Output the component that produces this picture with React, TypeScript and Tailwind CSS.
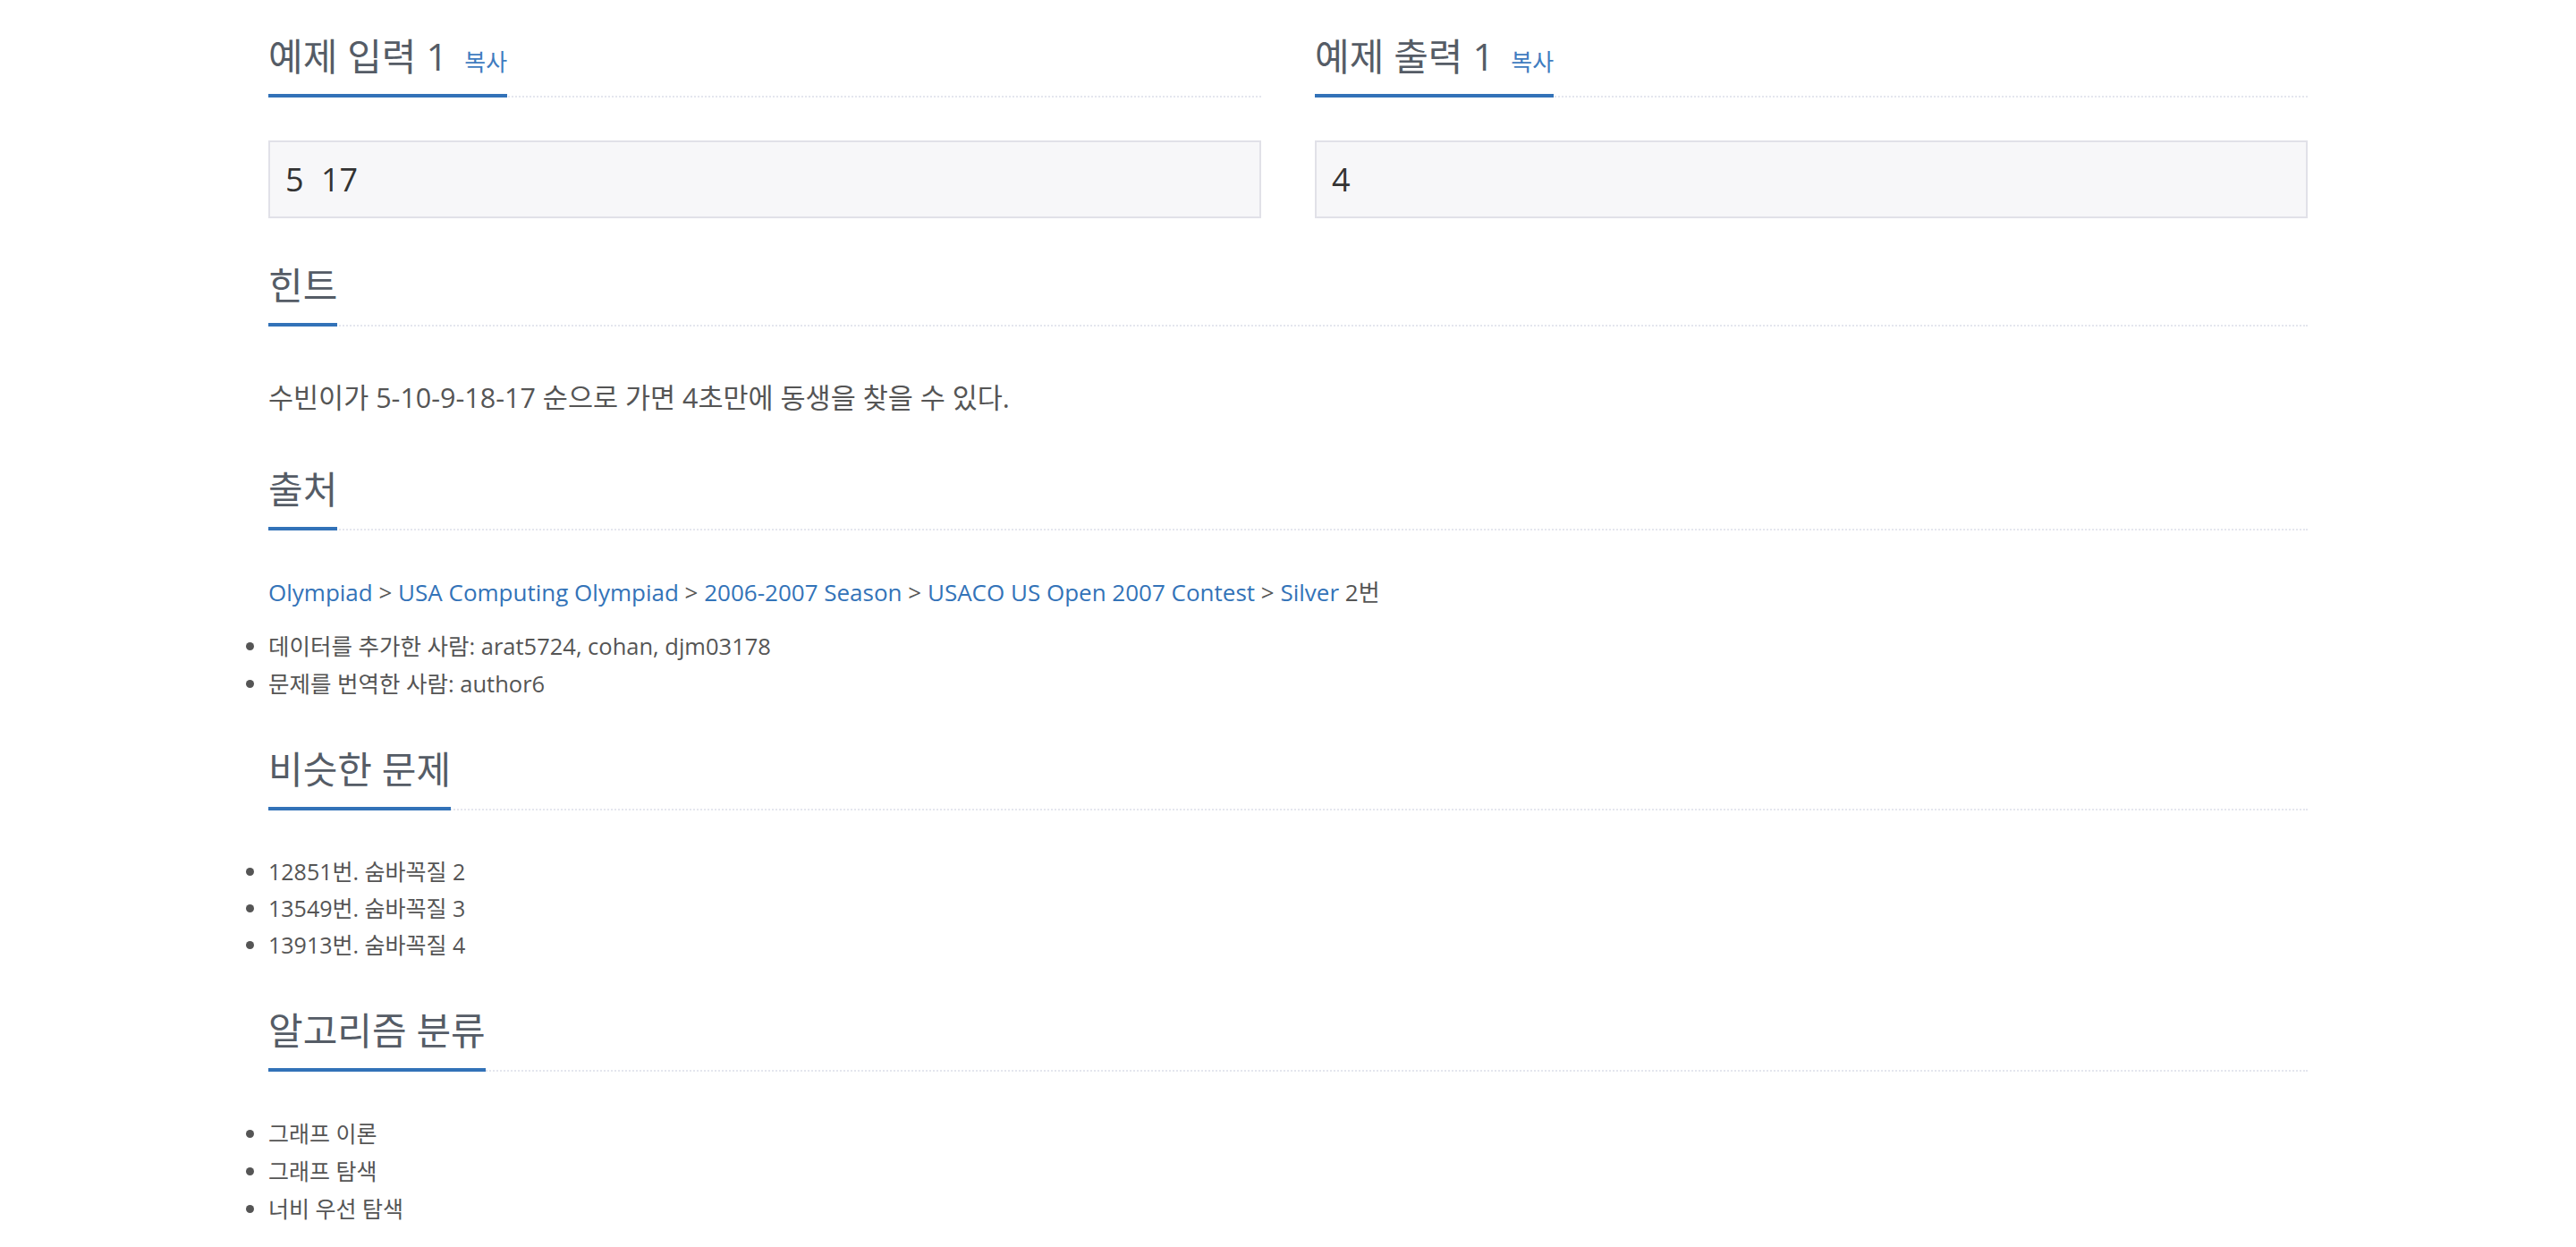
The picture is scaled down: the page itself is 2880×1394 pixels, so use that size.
import React from 'react';

const font = "font-['Open_Sans','Noto_Sans_CJK_KR',sans-serif]";

const Headline: React.FC<{ children: React.ReactNode; className?: string }> = ({ children, className = '' }) => (
    <div className={`flex border-b-2 border-dotted border-[#e4e6ee] ${className}`}>
        <h2 className="-mb-[2px] border-b-4 border-[#3272b8] pb-[19px] text-[42px] leading-[46px] font-normal text-[#555c66] whitespace-nowrap">
            {children}
        </h2>
    </div>
);

const SampleBox: React.FC<{ title: string; data: string }> = ({ title, data }) => (
    <div>
        <Headline>
            {title} <a href="#" className="ml-[8px] text-[26px] leading-none text-[#3f7cc0]">복사</a>
        </Headline>
        <pre className={`mt-[48px] border-2 border-[#e1e1e8] bg-[#f7f7f9] px-[17px] py-[16px] text-[36px] leading-[51px] text-[#333] [word-spacing:10px] ${font}`}>
            {data}
        </pre>
    </div>
);

const sourceTrail = ['Olympiad', 'USA Computing Olympiad', '2006-2007 Season', 'USACO US Open 2007 Contest'];

const similar = ['12851번. 숨바꼭질 2', '13549번. 숨바꼭질 3', '13913번. 숨바꼭질 4'];
const tags = ['그래프 이론', '그래프 탐색', '너비 우선 탐색'];

export default function App() {
    return (
        <div className={`min-h-screen bg-white ${font}`}>
            <div className="mx-auto w-[2280px] pt-[40px] pb-[22px]">
                <div className="grid grid-cols-2 gap-x-[60px]">
                    <SampleBox title="예제 입력 1" data="5 17" />
                    <SampleBox title="예제 출력 1" data="4" />
                </div>

                <Headline className="mt-[52px]">힌트</Headline>
                <p className="mt-[57px] text-[30.5px] leading-[44px] text-[#555]">
                    수빈이가 5-10-9-18-17 순으로 가면 4초만에 동생을 찾을 수 있다.
                </p>

                <Headline className="mt-[58px]">출처</Headline>
                <p className="mt-[49px] text-[26px] leading-[40px] text-[#555]">
                    {sourceTrail.map(s => (
                        <React.Fragment key={s}>
                            <a href="#" className="text-[#3373b8]">{s}</a> &gt;{' '}
                        </React.Fragment>
                    ))}
                    <a href="#" className="text-[#3373b8]">Silver</a> 2번
                </p>
                <ul className="mt-[19px] list-disc text-[25.5px] leading-[42px] text-[#555]">
                    <li>데이터를 추가한 사람: arat5724, cohan, djm03178</li>
                    <li>문제를 번역한 사람: author6</li>
                </ul>

                <Headline className="mt-[52px]">비슷한 문제</Headline>
                <ul className="mt-[48px] list-disc text-[25px] leading-[41px] text-[#555]">
                    {similar.map(s => <li key={s}>{s}</li>)}
                </ul>

                <Headline className="mt-[52px]">알고리즘 분류</Headline>
                <ul className="mt-[48px] list-disc text-[25px] leading-[42px] text-[#555]">
                    {tags.map(t => <li key={t}>{t}</li>)}
                </ul>
            </div>
        </div>
    );
}
